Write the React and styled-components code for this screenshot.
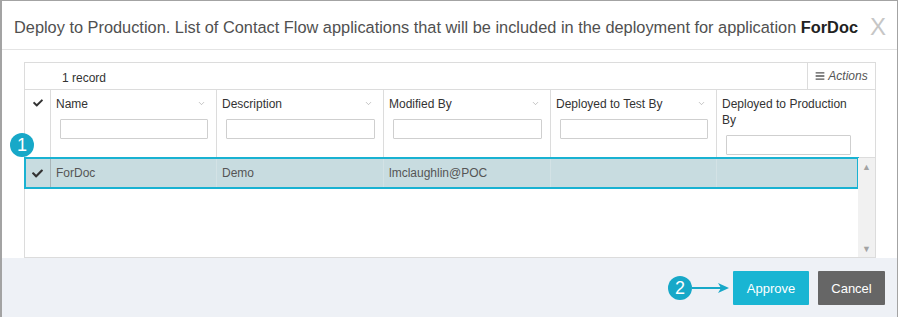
import React from "react";
import styled, { createGlobalStyle } from "styled-components";
import { FaCheck, FaBars } from "react-icons/fa";
import { ChevronDown } from "lucide-react";

const GlobalStyle = createGlobalStyle`
  body {
    margin: 0;
    font-family: "Liberation Sans", Arial, sans-serif;
    background: #fff;
  }
  * { box-sizing: border-box; }
`;

const Modal = styled.div`
  position: relative;
  width: 898px;
  height: 317px;
  border: 1px solid #a3a3a3;
  border-left-width: 2px;
  display: flex;
  flex-direction: column;
  background: #fff;
`;

const Header = styled.div`
  height: 49px;
  flex: none;
  border-bottom: 1px solid #e4e4e4;
  display: flex;
  align-items: center;
  justify-content: space-between;
  padding: 4px 11px 0 12px;
`;

const Title = styled.h1`
  margin: 0;
  font-size: 16.35px;
  font-weight: normal;
  color: #505050;
  white-space: nowrap;
  b {
    font-weight: 600;
    color: #222;
  }
`;

const Close = styled.span`
  font-size: 24px;
  color: #c6c6c6;
  font-weight: 300;
  line-height: 1;
`;

const Body = styled.div`
  flex: 1;
  padding: 12px 21px 0 22px;
`;

const Grid = styled.div`
  width: 852px;
  border: 1px solid #dcdcdc;
  display: flex;
  flex-direction: column;
  font-size: 12px;
  color: #333;
`;

const Toolbar = styled.div`
  height: 27px;
  border-bottom: 1px solid #dcdcdc;
  display: flex;
  align-items: center;
  justify-content: space-between;
`;

const Count = styled.span`
  padding-left: 37px;
  padding-top: 4px;
  color: #333;
`;

const ActionsButton = styled.div`
  width: 68px;
  height: 100%;
  border-left: 1px solid #dcdcdc;
  display: flex;
  align-items: center;
  justify-content: center;
  gap: 3px;
  color: #555;
  font-style: italic;
  font-size: 12px;
`;

const cols = "26px 166px 167px 167px 166px 158px";

const HeadRow = styled.div`
  display: grid;
  grid-template-columns: ${cols};
  height: 68px;
  border-bottom: 1px solid #dcdcdc;
`;

const HeadCell = styled.div`
  border-right: ${({ $last }) => ($last ? "none" : "1px solid #dcdcdc")};
  padding: 6px ${({ $last }) => ($last ? "20px" : "4px")} 0 5px;
  display: flex;
  flex-direction: column;
  gap: 7px;
`;

const CheckHead = styled.div`
  border-right: 1px solid #dcdcdc;
  display: flex;
  justify-content: center;
  padding-top: 8px;
  color: #333;
`;

const Label = styled.div`
  display: flex;
  justify-content: space-between;
  align-items: flex-start;
  line-height: 16px;
  color: #333;
  svg {
    margin: 3px 6px 0 0;
    color: #999;
    flex: none;
  }
`;

const Filter = styled.input`
  margin: 0 4px;
  width: calc(100% - 8px);
  height: 20px;
  border: 1px solid #cfcfcf;
  border-radius: 1px;
  background: #fff;
  outline: none;
`;

const Viewport = styled.div`
  height: 99px;
  display: flex;
`;

const Rows = styled.div`
  flex: 1;
`;

const Row = styled.div`
  display: grid;
  grid-template-columns: 26px 166px 167px 167px 166px 141px;
  height: 30px;
  background: ${({ $selected }) => ($selected ? "#c8dce0" : "#fff")};
  outline: ${({ $selected }) => ($selected ? "2px solid #19b2d2" : "none")};
  outline-offset: -1px;
  color: #555;
`;

const Cell = styled.div`
  display: flex;
  align-items: center;
  padding-left: 5px;
  border-right: 1px solid #d3e2e5;
  &:last-child {
    border-right: none;
  }
`;

const CheckCell = styled(Cell)`
  justify-content: center;
  padding-left: 0;
  border-right: 1px solid #a9b5b8;
  color: #333;
`;

const Scrollbar = styled.div`
  width: 17px;
  background: #f1f1f1;
  display: flex;
  flex-direction: column;
  justify-content: space-between;
  align-items: center;
  padding: 4px 0 3px;
  color: #a3a3a3;
  font-size: 9px;
`;

const Footer = styled.div`
  height: 60px;
  flex: none;
  background: #eef1f6;
  display: flex;
  align-items: center;
  justify-content: flex-end;
  padding-right: 12px;
`;

const Badge = styled.div`
  width: 24px;
  height: 24px;
  border-radius: 50%;
  background: #17a8c8;
  color: #fff;
  font-size: 18px;
  display: flex;
  align-items: center;
  justify-content: center;
  flex: none;
`;

const FloatBadge = styled(Badge)`
  position: absolute;
  left: 8px;
  top: 132px;
`;

const Arrow = styled.svg`
  margin-right: 4px;
  flex: none;
`;

const Button = styled.button`
  height: 34px;
  width: ${({ $w }) => $w}px;
  margin-left: ${({ $gap }) => $gap}px;
  border: none;
  border-radius: 1px;
  color: #fff;
  font-family: inherit;
  font-size: 13px;
  background: ${({ $primary }) => ($primary ? "#19b5d3" : "#666666")};
  cursor: pointer;
`;

const columns = [
  { label: "Name", sort: true },
  { label: "Description", sort: true },
  { label: "Modified By", sort: true },
  { label: "Deployed to Test By", sort: true },
  { label: "Deployed to Production By", sort: false, last: true },
];

export default function App() {
  return (
    <>
      <GlobalStyle />
      <Modal>
        <Header>
          <Title>
            Deploy to Production. List of Contact Flow applications that will be
            included in the deployment for application <b>ForDoc</b>
          </Title>
          <Close>X</Close>
        </Header>
        <Body>
          <Grid>
            <Toolbar>
              <Count>1 record</Count>
              <ActionsButton>
                <FaBars size={10} style={{ fontStyle: "normal" }} />
                Actions
              </ActionsButton>
            </Toolbar>
            <HeadRow>
              <CheckHead>
                <FaCheck size={10} />
              </CheckHead>
              {columns.map((c) => (
                <HeadCell key={c.label} $last={c.last}>
                  <Label>
                    <span>{c.label}</span>
                    {c.sort && <ChevronDown size={9} strokeWidth={1.5} />}
                  </Label>
                  <Filter type="text" />
                </HeadCell>
              ))}
            </HeadRow>
            <Viewport>
              <Rows>
                <Row $selected>
                  <CheckCell>
                    <FaCheck size={11} />
                  </CheckCell>
                  <Cell>ForDoc</Cell>
                  <Cell>Demo</Cell>
                  <Cell>lmclaughlin@POC</Cell>
                  <Cell />
                  <Cell />
                </Row>
              </Rows>
              <Scrollbar>
                <span>▲</span>
                <span>▼</span>
              </Scrollbar>
            </Viewport>
          </Grid>
        </Body>
        <Footer>
          <Badge>2</Badge>
          <Arrow width="37" height="12" viewBox="0 0 37 12">
            <line x1="0" y1="6" x2="30" y2="6" stroke="#17a8c8" strokeWidth="2" />
            <path d="M26 1 L37 6 L26 11 L29 6 Z" fill="#17a8c8" />
          </Arrow>
          <Button $primary $w={76} $gap={0}>
            Approve
          </Button>
          <Button $w={67} $gap={9}>
            Cancel
          </Button>
        </Footer>
        <FloatBadge>1</FloatBadge>
      </Modal>
    </>
  );
}
